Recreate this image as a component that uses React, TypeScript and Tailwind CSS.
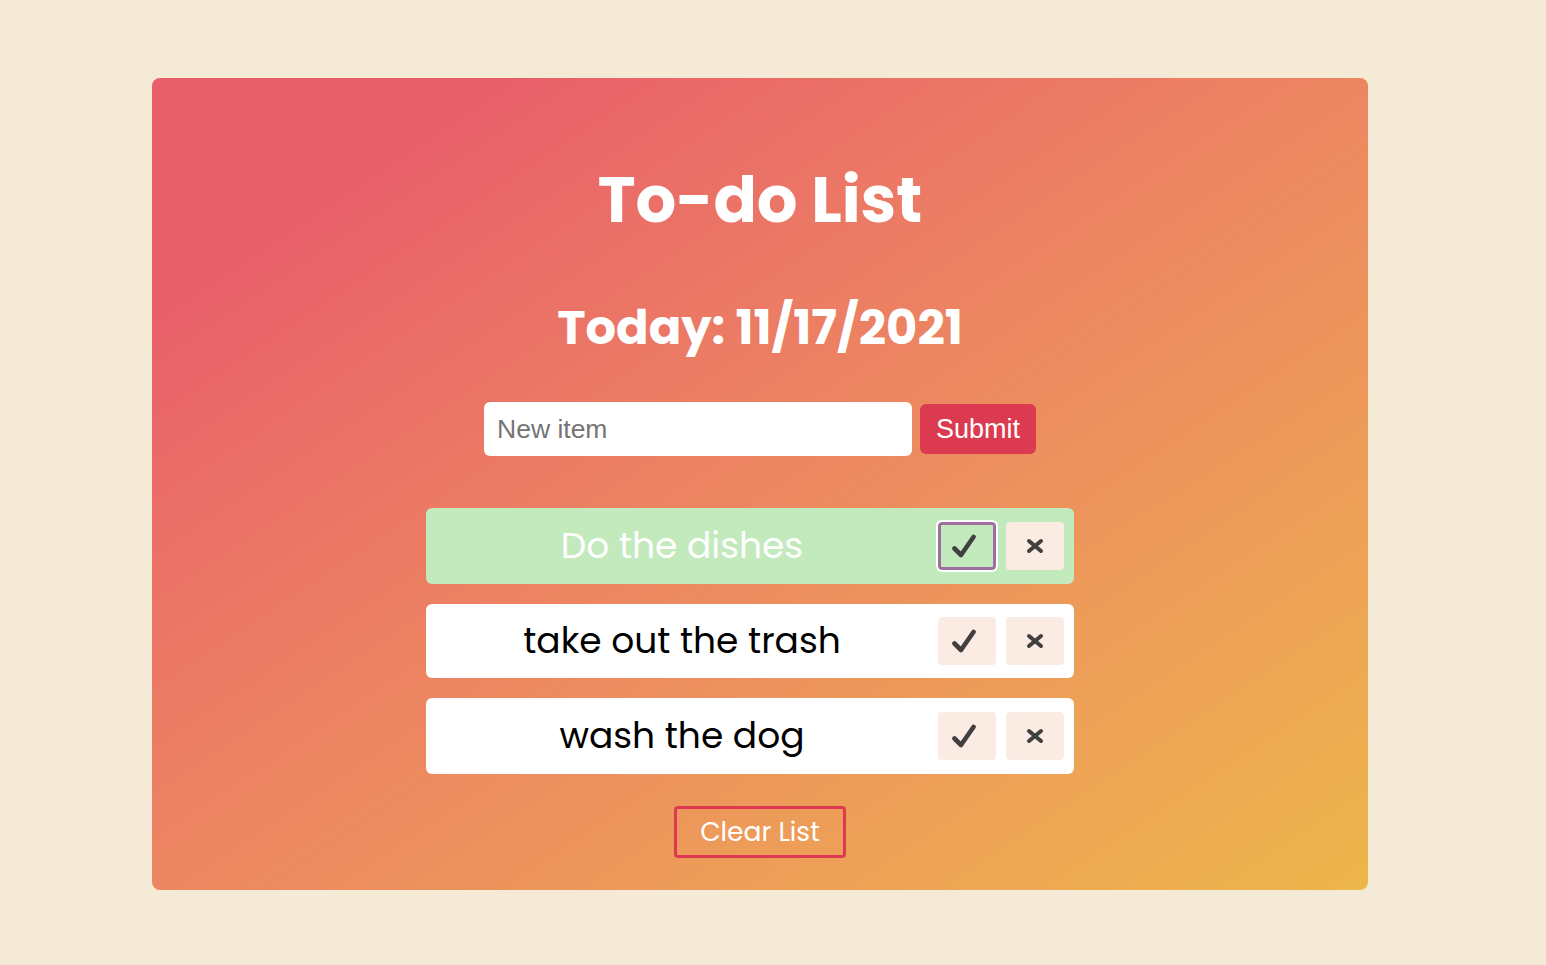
import { useState } from 'react';

interface Item {
  id: number;
  text: string;
  done: boolean;
}

const font = { fontFamily: 'Poppins, Inter, "Noto Sans", sans-serif' };
const arial = { fontFamily: '"Liberation Sans", Arial, sans-serif' };

function TodoRow({ item, focused, tall }: { item: Item; focused?: boolean; tall?: boolean }) {
  return (
    <li
      className={`flex items-center rounded-md pr-[10px] ${item.done ? 'bg-[#c3eabd]' : 'bg-white'} ${tall ? 'h-[76px]' : 'h-[74px]'}`}
    >
      <span
        className={`flex-1 text-center text-[36px] ${item.done ? 'text-white' : 'text-black'}`}
        style={font}
      >
        {item.text}
      </span>
      <div className="flex gap-[10px]">
        <button
          className={`w-[58px] h-[48px] rounded flex items-center justify-center ${focused ? 'bg-transparent border-[3px] border-[#a06fa2] outline-2 outline-white' : 'bg-[#faece3]'}`}
        >
          <svg width="26" height="24" viewBox="0 0 26 24" fill="none" className="-ml-[6px]">
            <path d="M3.5 14.5 L10 21 L22.5 3" stroke="#404040" strokeWidth="4.6" strokeLinecap="round" strokeLinejoin="round" />
          </svg>
        </button>
        <button className="w-[58px] h-[48px] rounded flex items-center justify-center bg-[#faece3]">
          <svg width="18" height="16" viewBox="0 0 18 16" fill="none">
            <path d="M3 3 L15 13 M15 3 L3 13" stroke="#404040" strokeWidth="4" strokeLinecap="round" />
          </svg>
        </button>
      </div>
    </li>
  );
}

export default function App() {
  const [items] = useState<Item[]>([
    { id: 1, text: 'Do the dishes', done: true },
    { id: 2, text: 'take out the trash', done: false },
    { id: 3, text: 'wash the dog', done: false },
  ]);

  return (
    <div className="min-h-screen bg-[#f5ead6] pt-[78px] pb-[75px]">
      <div className="ml-[152px] w-[1216px] h-[812px] rounded-lg bg-gradient-to-br from-[#e9606a] from-15% to-[#edb64a] flex flex-col items-center">
        <h1 className="mt-[90px] text-white text-[64px] font-bold leading-none" style={font}>
          To-do List
        </h1>
        <h2 className="mt-[72px] text-white text-[48px] font-bold leading-none" style={font}>
          Today: 11/17/2021
        </h2>
        <form className="mt-[50px] flex items-center gap-2" onSubmit={(e) => e.preventDefault()}>
          <input
            placeholder="New item"
            className="w-[428px] h-[54px] rounded-md bg-white px-[13px] text-[26.5px] placeholder:text-[#757575] outline-none"
            style={arial}
          />
          <button className="h-[50px] w-[116px] rounded-md bg-[#dc3a50] text-white text-[27px]" style={arial}>
            Submit
          </button>
        </form>
        <ul className="mt-[52px] mr-[20px] w-[648px] flex flex-col gap-[20px]">
          {items.map((item, i) => (
            <TodoRow key={item.id} item={item} focused={i === 0} tall={i !== 1} />
          ))}
        </ul>
        <button
          className="mt-[32px] w-[172px] h-[52px] border-[3px] border-[#dc3a50] rounded-sm text-white text-[26.5px]"
          style={font}
        >
          Clear List
        </button>
      </div>
    </div>
  );
}
